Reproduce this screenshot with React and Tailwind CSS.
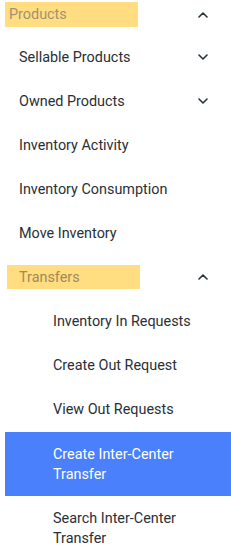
import React from "react";

const Chevron = ({ up }) => (
  <svg width="10" height="6" viewBox="0 0 10 6" fill="none" className="shrink-0">
    <polyline
      points={up ? "1,5 5,1 9,5" : "1,1 5,5 9,1"}
      stroke="#263238"
      strokeWidth="1.6"
      strokeLinecap="round"
      strokeLinejoin="round"
    />
  </svg>
);

const Row = ({ children, chevron }) => (
  <div className="h-[44px] flex items-center justify-between pl-[19px] pr-[23px] text-[14.4px] text-[#2a2f36]">
    <span className="pt-[2px]">{children}</span>
    {chevron}
  </div>
);

const Sub = ({ children }) => (
  <div className="h-[44px] flex items-center pl-[53px] pt-[2px] text-[14.4px] text-[#2a2f36]">
    {children}
  </div>
);

export default function App() {
  return (
    <div className="w-[231px] h-[552px] bg-white overflow-hidden" style={{ fontFamily: "Roboto, 'Liberation Sans', sans-serif" }}>
      <div className="h-[35px] pt-[2px] flex items-start justify-between pr-[23px]">
        <div className="ml-[5px] w-[133px] h-[25px] bg-[#ffdd80] flex items-center pl-[4px] text-[14.4px] text-[#a39273]">
          Products
        </div>
        <div className="h-[25px] flex items-center">
          <Chevron up />
        </div>
      </div>
      <Row chevron={<Chevron />}>Sellable Products</Row>
      <Row chevron={<Chevron />}>Owned Products</Row>
      <Row>Inventory Activity</Row>
      <Row>Inventory Consumption</Row>
      <Row>Move Inventory</Row>
      <div className="h-[44px] flex items-center justify-between pr-[23px]">
        <div className="ml-[7px] w-[133px] h-[24px] bg-[#ffdd80] flex items-center pl-[12px] pt-[1px] text-[14.4px] text-[#a08a5c]">
          Transfers
        </div>
        <Chevron up />
      </div>
      <Sub>Inventory In Requests</Sub>
      <Sub>Create Out Request</Sub>
      <Sub>View Out Requests</Sub>
      <div className="mt-[1px] ml-[5px] h-[64px] bg-[#4a80fc] flex items-center pl-[48px] pr-[10px] pt-[1px] text-[14.4px] leading-[20px] text-white">
        Create Inter-Center Transfer
      </div>
      <div className="h-[64px] flex items-center pl-[53px] pr-[10px] pt-[1px] text-[14.4px] leading-[20px] text-[#2a2f36]">
        Search Inter-Center Transfer
      </div>
    </div>
  );
}
